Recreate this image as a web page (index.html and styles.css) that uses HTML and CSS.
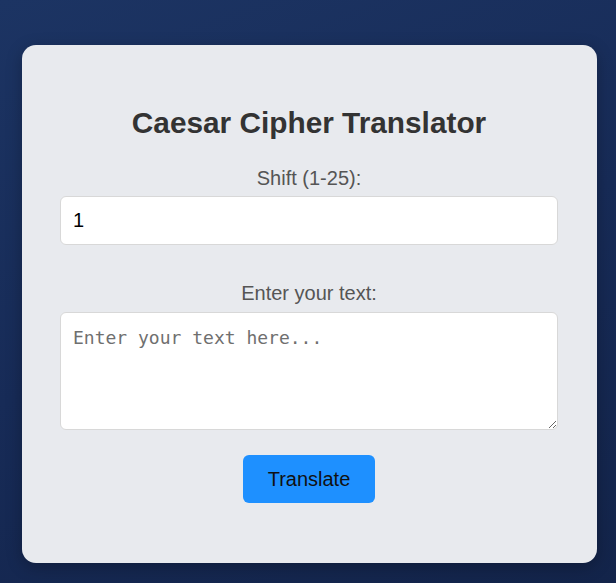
FILE: index.html
```html
<!DOCTYPE html>
<html lang="en">
<head>
<meta charset="utf-8">
<title>Caesar Cipher Translator</title>
<link rel="stylesheet" href="styles.css">
</head>
<body>
<main class="card">
  <h1 class="title">Caesar Cipher Translator</h1>
  <label class="label" for="shift">Shift (1-25):</label>
  <input class="field" id="shift" type="number" min="1" max="25" value="1">
  <label class="label label-text" for="text">Enter your text:</label>
  <textarea class="area" id="text" placeholder="Enter your text here..."></textarea>
  <button class="btn" type="button">Translate</button>
</main>
</body>
</html>
```
FILE: styles.css
```css
html, body {
  margin: 0;
  height: 100%;
}
body {
  background: linear-gradient(160deg, #1c3463 0%, #172b57 50%, #13244a 100%);
  font-family: "Liberation Sans", Arial, sans-serif;
  padding: 45px 19px 0 22px;
  box-sizing: border-box;
  overflow: hidden;
}
.card {
  width: 575px;
  box-sizing: border-box;
  background: #e8eaee;
  border-radius: 14px;
  padding: 61px 39px 60px 38px;
  display: flex;
  flex-direction: column;
  align-items: center;
  box-shadow: 0 4px 16px rgba(0, 0, 0, 0.25);
}
.title {
  margin: 0;
  font-size: 29.8px;
  line-height: 34px;
  font-weight: bold;
  color: #333;
}
.label {
  margin-top: 26px;
  font-size: 20px;
  line-height: 24px;
  color: #555;
}
.label-text {
  margin-top: 36px;
}
.field,
.area {
  width: 100%;
  box-sizing: border-box;
  border: 1px solid #d8d8d8;
  border-radius: 6px;
  background: #fff;
  margin-top: 6px;
}
.field {
  height: 49px;
  padding: 0 12px;
  font-family: "Liberation Sans", Arial, sans-serif;
  font-size: 20px;
  color: #000;
  -moz-appearance: textfield;
  appearance: textfield;
}
.field::-webkit-inner-spin-button,
.field::-webkit-outer-spin-button {
  -webkit-appearance: none;
  margin: 0;
}
.area {
  height: 118px;
  margin-top: 7px;
  padding: 13px 12px 11px;
  font-family: "DejaVu Sans Mono", monospace;
  font-size: 18px;
  line-height: 24px;
  resize: vertical;
}
.area::placeholder {
  color: #6f6f6f;
}
.btn {
  margin-top: 25px;
  width: 132px;
  height: 48px;
  background: #1e90ff;
  color: #111;
  border: none;
  border-radius: 6px;
  font-family: "Liberation Sans", Arial, sans-serif;
  font-size: 20px;
}
```
